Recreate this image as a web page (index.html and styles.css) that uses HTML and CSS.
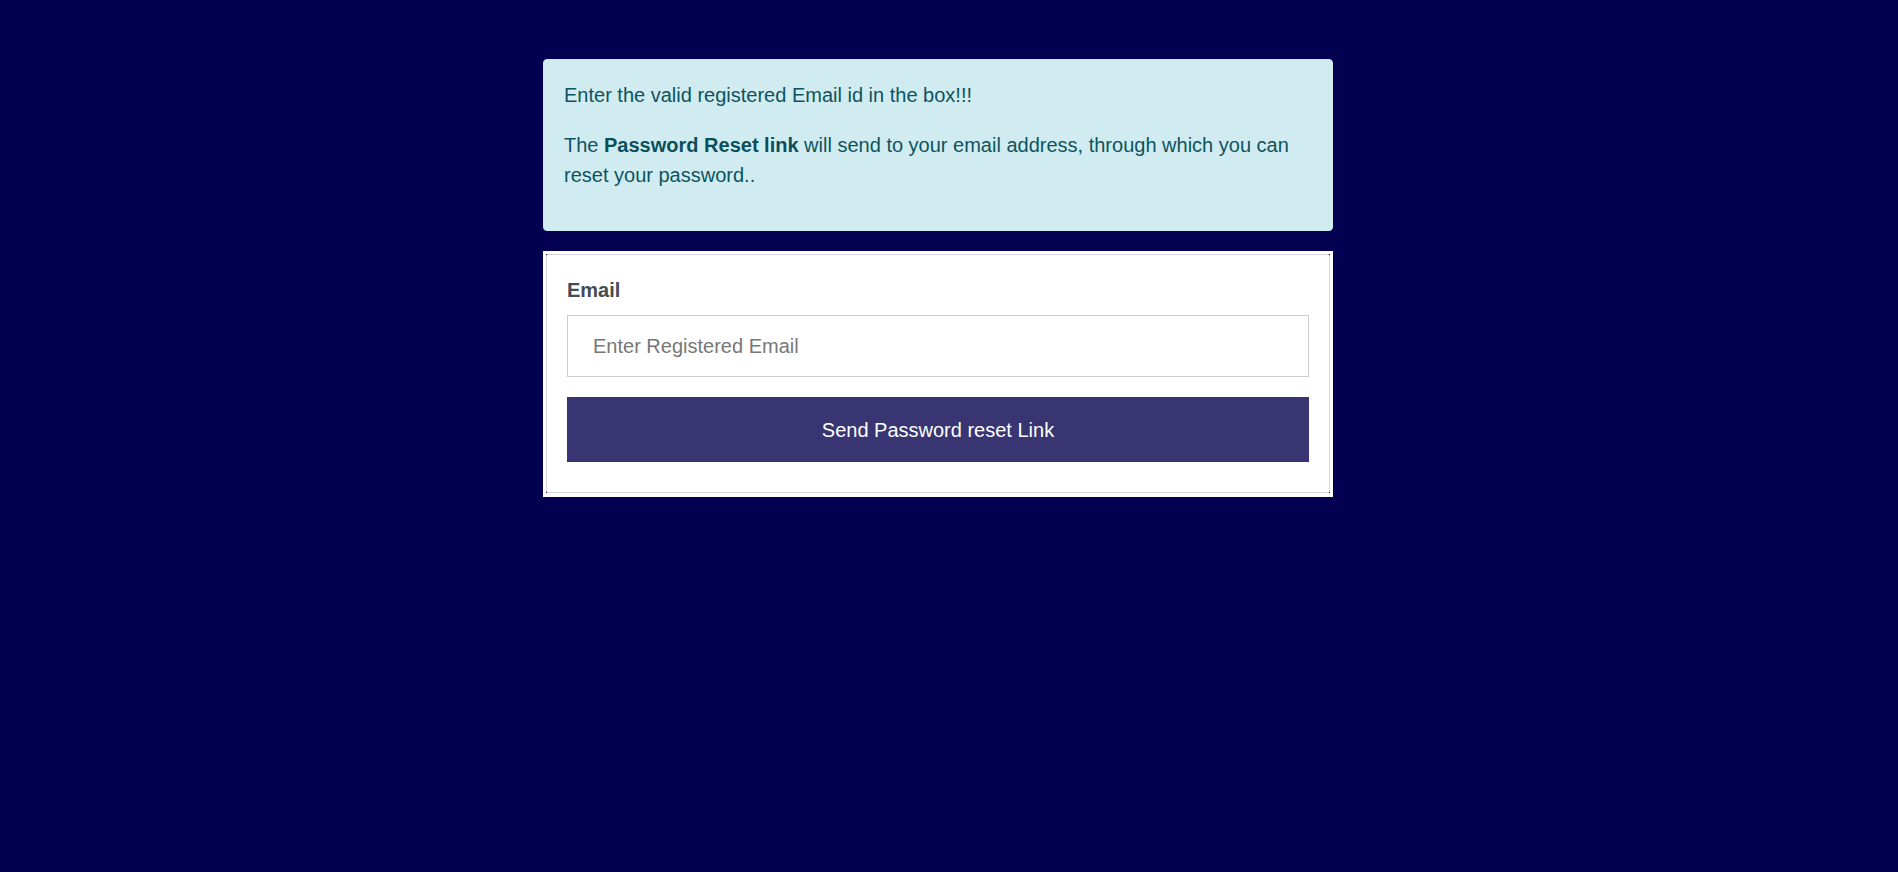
FILE: index.html
```html
<!DOCTYPE html>
<html>
<head>
<meta charset="utf-8">
<title>Forgot Password</title>
<link rel="stylesheet" href="styles.css">
</head>
<body>
<div class="wrap">
  <div class="alert">
    <p>Enter the valid registered Email id in the box!!!</p>
    <p>The <b>Password Reset link</b> will send to your email address, through which you can reset your password..</p>
  </div>
  <div class="frame">
    <form class="card">
      <label class="label" for="email">Email</label>
      <input class="input" id="email" type="email" placeholder="Enter Registered Email">
      <button class="btn" type="button">Send Password reset Link</button>
    </form>
  </div>
</div>
</body>
</html>
```
FILE: styles.css
```css
html, body {
  margin: 0;
  padding: 0;
  background: #030052;
  font-family: "Liberation Sans", Arial, sans-serif;
  font-size: 20px;
  line-height: 30px;
}
* { box-sizing: border-box; }
.wrap {
  width: 812px;
  margin: 0 auto;
  padding: 59px 22px 0 0;
  display: flex;
  flex-direction: column;
  gap: 20px;
}
.alert {
  background: #d1ecf1;
  color: #0c5460;
  border: 1px solid #d1ecf1;
  border-radius: 4px;
  padding: 20px;
}
.alert p {
  margin: 0 0 20px 0;
}
.alert b {
  font-weight: bold;
  color: #0b4f5b;
}
.frame {
  border: 3px solid #ffffff;
  border-bottom-width: 4px;
  background: #030052;
}
.card {
  margin: 0;
  background: #ffffff;
  border: 1px solid #d3d5e0;
  border-radius: 2px;
  padding: 20px 20px 30px 20px;
  display: flex;
  flex-direction: column;
}
.label {
  font-weight: bold;
  color: #454b55;
  margin-bottom: 10px;
}
.input {
  font-family: inherit;
  font-size: 20px;
  line-height: 30px;
  height: 62px;
  padding: 15px 25px;
  border: 1px solid #cccccc;
  border-radius: 0;
  color: #495057;
  outline: none;
  margin: 0 0 20px 0;
}
.input::placeholder {
  color: #777777;
}
.btn {
  font-family: inherit;
  font-size: 20px;
  line-height: 30px;
  height: 65px;
  border: none;
  border-radius: 0;
  background: #383572;
  color: #ffffff;
  cursor: pointer;
}
```
